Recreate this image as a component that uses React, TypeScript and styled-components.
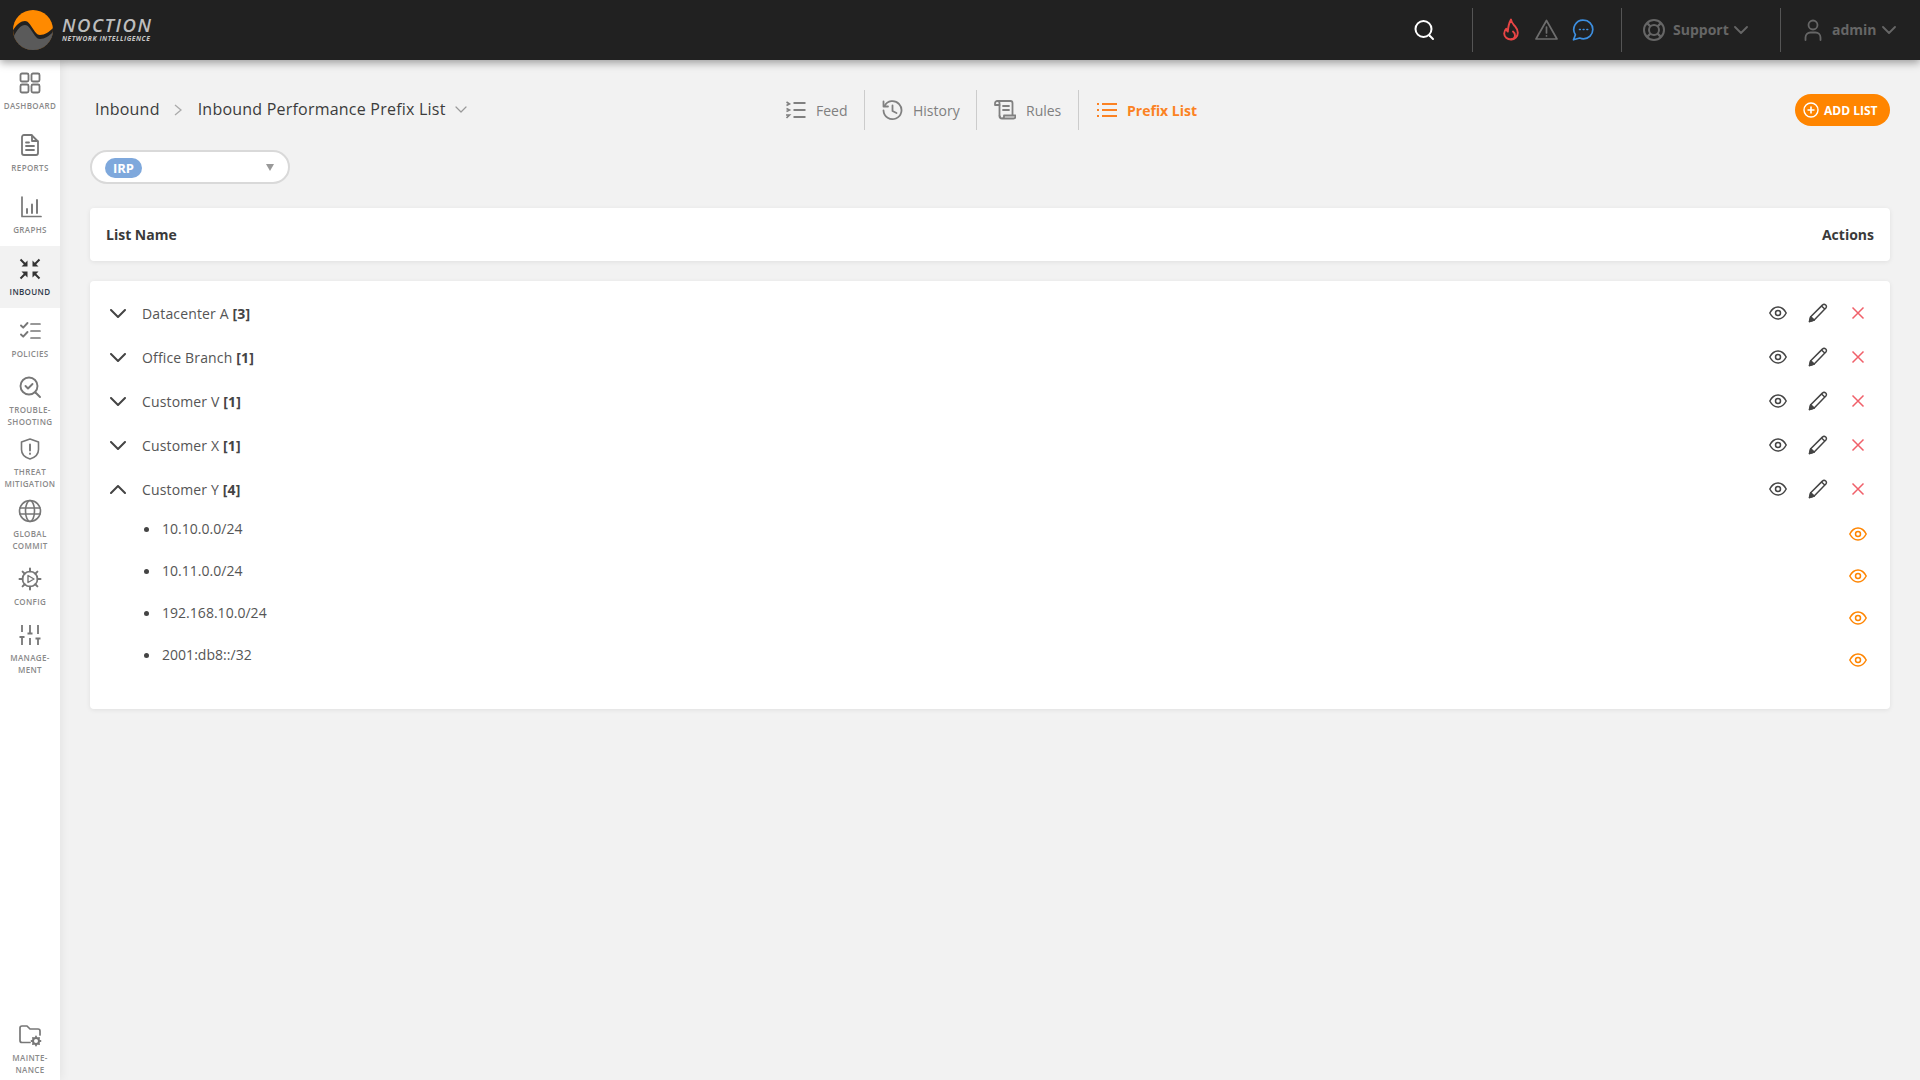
import React from "react";
import styled, { createGlobalStyle } from "styled-components";

const Global = createGlobalStyle`
  html, body { margin: 0; padding: 0; height: 100%; background: #f2f2f2; }
  body { font-family: "Open Sans", "Noto Sans", "Liberation Sans", sans-serif; color: #444; }
  * { box-sizing: border-box; }
`;

const Page = styled.div`
  width: 1920px;
  height: 1080px;
  display: grid;
  grid-template-rows: 60px 1fr;
  grid-template-columns: 60px 1fr;
  background: #f2f2f2;
  overflow: hidden;
`;

const TopBar = styled.header`
  grid-column: 1 / 3;
  background: #212121;
  display: flex;
  align-items: center;
  box-shadow: 0 3px 8px rgba(0, 0, 0, 0.35);
  z-index: 2;
  position: relative;
  padding-left: 13px;
`;

const Logo = styled.div`
  display: flex;
  align-items: center;
  gap: 9px;
  flex: 1;
`;

const LogoText = styled.div`
  display: flex;
  flex-direction: column;
  color: #bdbdbd;
  font-style: italic;
  font-weight: 700;
  margin-top: -3px;
`;

const LogoName = styled.span`
  font-size: 18.500px;
  line-height: 20px;
  font-weight: 600;
  letter-spacing: 1.500px;
`;

const LogoSub = styled.span`
  font-size: 6.700px;
  line-height: 8px;
  letter-spacing: 0.55px;
  color: #c8c8c8;
`;

const BarGroup = styled.div<{ $w: number; $gap?: number; $pl?: number }>`
  width: ${(p) => p.$w}px;
  height: 44px;
  display: flex;
  align-items: center;
  gap: ${(p) => p.$gap ?? 0}px;
  padding-left: ${(p) => p.$pl ?? 0}px;
  border-right: 1px solid #555;
  &:last-child { border-right: none; }
`;

const BarLabel = styled.span<{ $mr?: number }>`
  font-size: 14px;
  font-weight: 700;
  color: #666;
  margin: -2px ${(p) => p.$mr ?? -2}px 0 0;
`;

const Side = styled.nav`
  background: #fff;
  width: 60px;
  height: 1020px;
  display: flex;
  flex-direction: column;
  box-shadow: 1px 0 10px rgba(0, 0, 0, 0.07);
  z-index: 1;
`;

const SideSpacer = styled.div`
  flex: 1;
`;

const SideItem = styled.div<{ $active?: boolean; $two?: boolean }>`
  height: 62px;
  padding-top: ${(p) => (p.$two ? 5 : 11)}px;
  display: flex;
  flex-direction: column;
  align-items: center;
  color: ${(p) => (p.$active ? "#333" : "#777")};
  background: ${(p) => (p.$active ? "#f2f2f2" : "transparent")};
  svg { display: block; flex: none; }
`;

const SideLabel = styled.span<{ $active?: boolean }>`
  margin-top: 4.500px;
  font-size: 8px;
  line-height: 12px;
  font-weight: 600;
  text-align: center;
  letter-spacing: 0.35px;
  color: ${(p) => (p.$active ? "#2f3a4a" : "#8a8a8a")};
  white-space: pre-line;
`;

const Main = styled.main`
  padding: 30px 30px 0 30px;
`;

const HeadRow = styled.div`
  display: grid;
  grid-template-columns: 679px auto 1fr;
  align-items: center;
  height: 32px;
`;

const Crumbs = styled.div`
  display: flex;
  align-items: center;
  font-size: 16px;
  font-weight: 500;
  letter-spacing: 0.22px;
  color: #3c3c3c;
  padding-left: 5px;
  margin-top: -2px;
`;

const CrumbSep = styled.span`
  display: flex;
  margin: 2px 16px 0 14px;
  color: #aaa;
`;

const CrumbChevron = styled.span`
  display: flex;
  margin-left: 9px;
  color: #999;
`;

const Tabs = styled.div`
  display: flex;
  align-items: center;
`;

const Tab = styled.div<{ $active?: boolean; $w: number }>`
  width: ${(p) => p.$w}px;
  height: 40px;
  display: flex;
  align-items: center;
  gap: 10px;
  padding-left: ${(p) => (p.$active ? 18 : 17)}px;
  font-size: 14px;
  font-weight: ${(p) => (p.$active ? 700 : 400)};
  color: ${(p) => (p.$active ? "#fb8223" : "#808080")};
  border-right: ${(p) => (p.$active ? "none" : "1px solid #ccc")};
`;

const HeadEnd = styled.div`
  display: flex;
  justify-content: flex-end;
`;

const AddButton = styled.div`
  width: 95px;
  height: 32px;
  border-radius: 16px;
  background: #ff8500;
  color: #fff;
  font-size: 12px;
  font-weight: 700;
  display: flex;
  align-items: center;
  padding-left: 8px;
  gap: 5px;
`;

const SelectBox = styled.div`
  margin-top: 28px;
  width: 200px;
  height: 34px;
  border: 2px solid #d9d9d9;
  border-radius: 17px;
  background: #fff;
  display: flex;
  align-items: center;
  justify-content: space-between;
  padding: 0 14px 0 13px;
`;

const Pill = styled.span`
  width: 37px;
  height: 20px;
  border-radius: 10px;
  background: #7ea8dc;
  color: #fff;
  font-size: 13px;
  font-weight: 700;
  display: flex;
  align-items: center;
  justify-content: center;
  margin-top: 1px;
`;

const Caret = styled.span`
  width: 0;
  height: 0;
  border-left: 4.500px solid transparent;
  border-right: 4.500px solid transparent;
  border-top: 7px solid #999;
`;

const Card = styled.section`
  background: #fff;
  border-radius: 4px;
  box-shadow: 0 1px 5px rgba(0, 0, 0, 0.08);
`;

const HeaderCard = styled(Card)`
  margin-top: 24px;
  height: 53px;
  display: flex;
  align-items: center;
  justify-content: space-between;
  padding: 0 16px;
  font-size: 14px;
  font-weight: 700;
  color: #3a3a3a;
`;

const ListCard = styled(Card)`
  margin-top: 20px;
  padding: 10px 12px 27px 0;
`;

const Row = styled.div`
  height: 44px;
  display: flex;
  align-items: center;
  font-size: 14px;
  color: #555;
`;

const RowChevron = styled.span`
  width: 52px;
  display: flex;
  justify-content: center;
  padding-left: 4px;
  color: #444;
`;

const RowName = styled.span`
  flex: 1;
  letter-spacing: 0.15px;
  b { font-weight: 700; color: #444; }
`;

const ActionBox = styled.span<{ $color?: string }>`
  width: 40px;
  height: 40px;
  display: flex;
  align-items: center;
  justify-content: center;
  color: ${(p) => p.$color ?? "#444"};
`;

const SubList = styled.ul`
  list-style: none;
  margin: 3px 0 0;
  padding: 0;
`;

const SubRow = styled.li`
  height: 42px;
  display: flex;
  align-items: flex-start;
  justify-content: space-between;
  font-size: 14px;
  line-height: 30px;
  color: #555;
`;

const SubText = styled.span`
  position: relative;
  margin-left: 72px;
  letter-spacing: 0.03px;
  &::before {
    content: "";
    position: absolute;
    left: -18px;
    top: 13px;
    width: 5px;
    height: 5px;
    border-radius: 50%;
    background: #444;
  }
`;

const S: React.FC<React.SVGProps<SVGSVGElement> & { size?: number }> = ({ size = 24, children, ...r }) => (
  <svg width={size} height={size} viewBox="0 0 24 24" fill="none" stroke="currentColor" strokeWidth={1.6} strokeLinecap="round" strokeLinejoin="round" {...r}>
    {children}
  </svg>
);

const LogoMark = () => (
  <svg width="40" height="40" viewBox="0 0 40 40">
    <defs>
      <clipPath id="lc"><circle cx="20" cy="20" r="20" /></clipPath>
    </defs>
    <g clipPath="url(#lc)">
      <rect width="40" height="40" fill="#ff8a00" />
      <path d="M0 20 C4 14 8 11 12 11 C18 11 21 25 27 25 C32 25 36 22 40 18 L40 40 L0 40 Z" fill="#212121" />
      <path d="M0 28 C4 19 8 15 12 15 C18 15 21 29 27 29 C32 29 36 26 40 22 L40 40 L0 40 Z" fill="#5a5a5a" />
    </g>
  </svg>
);

const IconDashboard = () => (
  <S size={24} strokeWidth={1.8}>
    <rect x="2.500" y="2.500" width="8" height="8" rx="1.500" />
    <rect x="13.500" y="2.500" width="8" height="8" rx="1.500" />
    <rect x="2.500" y="13.500" width="8" height="8" rx="1.500" />
    <rect x="13.500" y="13.500" width="8" height="8" rx="1.500" />
  </S>
);
const IconReports = () => (
  <S strokeWidth={1.8}>
    <path d="M13.500 2H6a2 2 0 0 0-2 2v16a2 2 0 0 0 2 2h12a2 2 0 0 0 2-2V8.500z" />
    <path d="M14 2.500v5.500h5.500" />
    <path d="M8 9.500h3M8 13h8M8 17h8" />
  </S>
);
const IconGraphs = () => (
  <S strokeWidth={1.7}>
    <path d="M4 2V21.500H23" />
    <path d="M9 18v-4M14 18V9.500M19 18V5" strokeWidth={1.9} />
  </S>
);
const IconInbound = () => (
  <S strokeWidth={2} strokeLinecap="butt">
    <path d="M2.500 2.500L7 7M21.500 2.500L17 7M2.500 21.500L7 17M21.500 21.500L17 17" />
    <path d="M9.500 3.500V9.500H3.500zM14.500 3.500V9.500H20.500zM9.500 20.500V14.500H3.500zM14.500 20.500V14.500H20.500z" fill="currentColor" stroke="none" />
  </S>
);
const IconPolicies = () => (
  <S strokeWidth={1.900}>
    <path d="M3 6.500l2.200 2.200L9.500 4M3 15.500l2.200 2.200L9.500 13" />
    <path d="M13 5h9M13 12h9M13 19h9" strokeWidth={1.700} />
  </S>
);
const IconTrouble = () => (
  <S>
    <circle cx="11" cy="11" r="8.500" strokeWidth={1.900} />
    <path d="M17.500 17.500L22 22" strokeWidth={1.900} />
    <path d="M7.500 11l2.500 2.500 4.500-4.500" strokeWidth={1.900} />
  </S>
);
const IconThreat = () => (
  <S>
    <path d="M12 2l8.500 3v7.500c0 5-3.500 8-8.500 9.500-5-1.500-8.500-4.500-8.500-9.500V5z" />
    <path d="M12 7.500v6M12 16.500v.4" strokeWidth={1.900} />
  </S>
);
const IconGlobe = () => (
  <S>
    <circle cx="12" cy="12" r="10.500" />
    <ellipse cx="12" cy="12" rx="4.500" ry="10.500" />
    <path d="M1.800 9h20.400M1.800 15h20.400" />
  </S>
);
const IconConfig = () => (
  <S strokeWidth={1.700}>
    <circle cx="12" cy="12" r="7.500" />
    <path d="M12 1.500v3M12 19.500v3M1.500 12h3M19.500 12h3M4.600 4.600l2.100 2.100M17.300 17.300l2.100 2.100M4.600 19.400l2.100-2.100M17.300 6.700l2.100-2.100" strokeWidth={2} />
    <path d="M10 8.500l6 3.500-6 3.500z" strokeWidth={1.400} />
  </S>
);
const IconManage = () => (
  <S strokeWidth={1.800} strokeLinecap="butt">
    <path d="M4 2v7M4 14v8M1.500 14h5M12 2v8.500M12 15v7M9.500 10.500h5M20 2v9M20 15.500v6.500M17.500 15.500h5" />
  </S>
);
const IconMaint = () => (
  <S strokeWidth={1.700}>
    <path d="M12 19.500H4a2 2 0 0 1-2-2V5a2 2 0 0 1 2-2h5l3 3h8a2 2 0 0 1 2 2v4" />
    <circle cx="18" cy="18" r="3" strokeWidth={2} />
    <path d="M18 13.500v1M18 21.500v1M13.500 18h1M21.500 18h1M14.900 14.900l.6.6M20.500 20.500l.6.6M14.900 21.100l.6-.6M20.500 15.500l.6-.6" strokeWidth={1.800} />
  </S>
);

const IconSearch = () => (
  <svg width="24" height="24" viewBox="0 0 24 24" fill="none" stroke="#fff" strokeWidth={2} strokeLinecap="round">
    <circle cx="11.500" cy="11" r="8" />
    <path d="M17.500 17.500L21 21" />
  </svg>
);
const IconFlame = () => (
  <svg width="20" height="24" viewBox="0 0 20 24" fill="none" stroke="#e84545" strokeWidth={1.900} strokeLinejoin="round" strokeLinecap="round">
    <path d="M10 1.500c.2 2.800 2.200 4.500 4 6.700 1.700 2.100 2.800 4.100 2.800 6.500 0 3.800-3 6.800-6.800 6.800S3.200 19 3.200 15.500c0-1.800.8-3.500 2.100-4.700.2 1.300.7 2.200 1.500 2.800C7.100 9.500 8 5 10 1.500z" />
    <path d="M10 21.300c2.700 0 4-2 4-4 0-1.500-.8-2.700-2-3.700" />
  </svg>
);
const IconWarn = () => (
  <svg width="23" height="24" viewBox="0.500 0 23 24" fill="none" stroke="#6e6e6e" strokeWidth={1.700} strokeLinejoin="round" strokeLinecap="round">
    <path d="M12 2.500L22.500 21H1.500z" />
    <path d="M12 9v6M12 17.800v.2" />
  </svg>
);
const IconChat = () => (
  <svg width="22" height="22" viewBox="0 0 22 22" fill="none" stroke="#3d8fe0" strokeWidth={1.700} strokeLinejoin="round">
    <path d="M11.500 1.200a9.300 9.300 0 0 1 0 18.600c-1.400 0-2.600-.3-3.800-.8L1.500 20.800l1.900-5.100A9.300 9.300 0 0 1 11.500 1.200z" />
    <path d="M7.500 10.500h.8M11.200 10.500h.8M14.900 10.500h.8" strokeWidth={1.600} strokeLinecap="round" />
  </svg>
);
const IconBuoy = () => (
  <svg width="24" height="24" viewBox="0 0 24 24" fill="none" stroke="#666" strokeWidth={2}>
    <circle cx="12" cy="12" r="10" />
    <circle cx="12" cy="12" r="5" />
    <path d="M5 5l3.500 3.500M19 5l-3.500 3.500M5 19l3.500-3.500M19 19l-3.500-3.500" strokeWidth={2.400} />
  </svg>
);
const IconUser = () => (
  <svg width="20" height="24" viewBox="0 0 20 24" fill="none" stroke="#666" strokeWidth={1.800} strokeLinecap="round">
    <circle cx="10" cy="7" r="4.500" />
    <path d="M2.500 22v-2.500a5 5 0 0 1 5-5h5a5 5 0 0 1 5 5V22" />
  </svg>
);
const Chev: React.FC<{ size?: number; w?: number; up?: boolean; color?: string; sw?: number }> = ({ size = 14, w = 8, up, color = "currentColor", sw = 1.500 }) => (
  <svg width={size} height={w} viewBox={`0 0 ${size} ${w}`} fill="none" stroke={color} strokeWidth={sw} strokeLinecap="round" strokeLinejoin="round">
    <path d={up ? `M1 ${w - 1}L${size / 2} 1L${size - 1} ${w - 1}` : `M1 1L${size / 2} ${w - 1}L${size - 1} 1`} />
  </svg>
);
const IconFeed = () => (
  <svg width="20" height="18" viewBox="0 0 20 18" fill="none" stroke="#808080" strokeWidth={1.800} strokeLinecap="butt">
    <path d="M7.500 2h12M7.500 9h12M7.500 16h12" />
    <path d="M0.500 1l3 2-3 1.500M0.500 7.500l3 1.500-3 1.500M0 14h3.500l-3 3" strokeWidth={1.600} />
  </svg>
);
const IconHistory = () => (
  <svg width="21" height="21" viewBox="0 0 21 21" fill="none" stroke="#808080" strokeWidth={1.800} strokeLinecap="round" strokeLinejoin="round">
    <path d="M2.500 6A9 9 0 1 1 1.500 10.500" />
    <path d="M1.500 1.500V6.500H6" />
    <path d="M10.500 5.500v5.500l4 2" />
  </svg>
);
const IconRules = () => (
  <svg width="22" height="20" viewBox="0 0 22 20" fill="none" stroke="#808080" strokeWidth={1.800} strokeLinejoin="round" strokeLinecap="round">
    <path d="M5.500 15.500V3a2 2 0 0 0-2-2h13a2 2 0 0 1 2 2v12" />
    <path d="M3.500 1a2.500 2.500 0 0 0-2.500 2.500V5h4.500" />
    <path d="M5.500 16a2.500 2.500 0 0 0 2.500 2.500h11.500a2 2 0 0 0 2-2V15.500H10v1a2 2 0 0 1-4 0" />
    <path d="M9 6h6M9 10h6" />
  </svg>
);
const IconPrefix = () => (
  <svg width="20" height="16" viewBox="0 0 20 16" fill="none" stroke="#fb8223" strokeWidth={1.800}>
    <path d="M5 2h15M5 8h15M5 14h15" />
    <path d="M0 2h2M0 8h2M0 14h2" />
  </svg>
);
const IconPlus = () => (
  <svg width="16" height="16" viewBox="0 0 16 16" fill="none" stroke="#fff" strokeWidth={1.400}>
    <circle cx="8" cy="8" r="7" />
    <path d="M8 4.500v7M4.500 8h7" strokeWidth={1.600} />
  </svg>
);
const IconEye: React.FC = () => (
  <svg width="18" height="14" viewBox="0 0 18 14" fill="none" stroke="currentColor" strokeWidth={1.500}>
    <path d="M0.800 7C2.800 3.200 5.700 1 9 1s6.200 2.200 8.200 6c-2 3.800-4.900 6-8.200 6S2.800 10.800 0.800 7z" />
    <circle cx="9" cy="7" r="2.500" />
  </svg>
);
const IconPencil = () => (
  <svg width="20" height="20" viewBox="0 0 20 20" fill="none" stroke="#444" strokeWidth={1.500} strokeLinejoin="round">
    <path d="M1.500 18.500l1.200-4.700L14.600 1.900a2 2 0 0 1 2.900 0 2 2 0 0 1 .6 2.800L6.200 17z" />
    <path d="M13.500 3l3.500 3.200" />
    <path d="M1.500 18.500l1.200-4.700 3.500 3.200z" fill="#444" />
  </svg>
);
const IconX = () => (
  <svg width="14" height="14" viewBox="0 0 14 14" fill="none" stroke="#f0606a" strokeWidth={1.500}>
    <path d="M1.500 1.500l11 11M12.500 1.500l-11 11" />
  </svg>
);

const sideTop: { label: string; icon: React.ReactNode; active?: boolean }[] = [
  { label: "DASHBOARD", icon: <IconDashboard /> },
  { label: "REPORTS", icon: <IconReports /> },
  { label: "GRAPHS", icon: <IconGraphs /> },
  { label: "INBOUND", icon: <IconInbound />, active: true },
  { label: "POLICIES", icon: <IconPolicies /> },
  { label: "TROUBLE-\nSHOOTING", icon: <IconTrouble /> },
  { label: "THREAT\nMITIGATION", icon: <IconThreat /> },
  { label: "GLOBAL\nCOMMIT", icon: <IconGlobe /> },
  { label: "CONFIG", icon: <IconConfig /> },
  { label: "MANAGE-\nMENT", icon: <IconManage /> },
];

const lists: { name: string; count: number; open?: boolean }[] = [
  { name: "Datacenter A", count: 3 },
  { name: "Office Branch", count: 1 },
  { name: "Customer V", count: 1 },
  { name: "Customer X", count: 1 },
  { name: "Customer Y", count: 4, open: true },
];
const prefixes = ["10.10.0.0/24", "10.11.0.0/24", "192.168.10.0/24", "2001:db8::/32"];

export default function App() {
  return (
    <Page>
      <Global />
      <TopBar>
        <Logo>
          <LogoMark />
          <LogoText>
            <LogoName>NOCTION</LogoName>
            <LogoSub>NETWORK INTELLIGENCE</LogoSub>
          </LogoText>
        </Logo>
        <BarGroup $w={61}><IconSearch /></BarGroup>
        <BarGroup $w={149} $pl={28} $gap={14}><IconFlame /><IconWarn /><IconChat /></BarGroup>
        <BarGroup $w={159} $pl={20} $gap={7}>
          <IconBuoy />
          <BarLabel>Support</BarLabel>
          <Chev color="#666" sw={1.800} />
        </BarGroup>
        <BarGroup $w={139} $pl={22} $gap={9}>
          <IconUser />
          <BarLabel $mr={-4}>admin</BarLabel>
          <Chev color="#666" sw={1.800} />
        </BarGroup>
      </TopBar>
      <Side>
        {sideTop.map((i) => (
          <SideItem key={i.label} $active={i.active} $two={i.label.includes("\n")}>
            {i.icon}
            <SideLabel $active={i.active}>{i.label}</SideLabel>
          </SideItem>
        ))}
        <SideSpacer />
        <SideItem $two>
          <IconMaint />
          <SideLabel>{"MAINTE-\nNANCE"}</SideLabel>
        </SideItem>
      </Side>
      <Main>
        <HeadRow>
          <Crumbs>
            <span>Inbound</span>
            <CrumbSep><svg width="8" height="12" viewBox="0 0 8 12" fill="none" stroke="currentColor" strokeWidth={1.300}><path d="M1 1l6 5-6 5" /></svg></CrumbSep>
            <span>Inbound Performance Prefix List</span>
            <CrumbChevron><Chev size={12} w={7} sw={1.200} /></CrumbChevron>
          </Crumbs>
          <Tabs>
            <Tab $w={96}><IconFeed />Feed</Tab>
            <Tab $w={112}><IconHistory />History</Tab>
            <Tab $w={102}><IconRules />Rules</Tab>
            <Tab $w={120} $active><IconPrefix />Prefix List</Tab>
          </Tabs>
          <HeadEnd>
            <AddButton><IconPlus />ADD LIST</AddButton>
          </HeadEnd>
        </HeadRow>
        <SelectBox>
          <Pill>IRP</Pill>
          <Caret />
        </SelectBox>
        <HeaderCard>
          <span>List Name</span>
          <span>Actions</span>
        </HeaderCard>
        <ListCard>
          {lists.map((l) => (
            <Row key={l.name}>
              <RowChevron><Chev size={16} w={9} up={l.open} sw={2} /></RowChevron>
              <RowName>{l.name} <b>[{l.count}]</b></RowName>
              <ActionBox><IconEye /></ActionBox>
              <ActionBox><IconPencil /></ActionBox>
              <ActionBox><IconX /></ActionBox>
            </Row>
          ))}
          <SubList>
            {prefixes.map((p) => (
              <SubRow key={p}>
                <SubText>{p}</SubText>
                <ActionBox $color="#ff8500"><IconEye /></ActionBox>
              </SubRow>
            ))}
          </SubList>
        </ListCard>
      </Main>
    </Page>
  );
}
